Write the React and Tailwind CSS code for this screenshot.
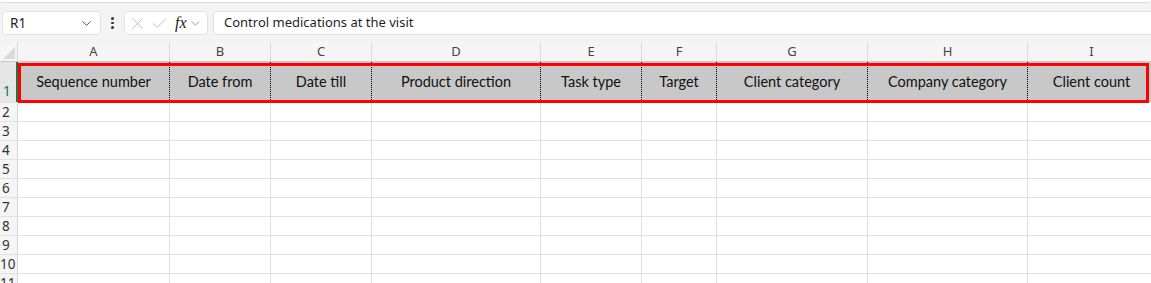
import { ChevronDown, X, Check } from "lucide-react";

const columns = [
  { letter: "A", width: "w-[152px]", label: "Sequence number" },
  { letter: "B", width: "w-[101px]", label: "Date from" },
  { letter: "C", width: "w-[101px]", label: "Date till" },
  { letter: "D", width: "w-[169px]", label: "Product direction" },
  { letter: "E", width: "w-[101px]", label: "Task type" },
  { letter: "F", width: "w-[75px]", label: "Target" },
  { letter: "G", width: "w-[151px]", label: "Client category" },
  { letter: "H", width: "w-[160px]", label: "Company category" },
  { letter: "I", width: "w-[128px]", label: "Client count" },
];

const emptyRows = [2, 3, 4, 5, 6, 7, 8, 9, 10, 11];

const uiFont = { fontFamily: "'Noto Sans', 'Open Sans', sans-serif" };

function FormulaBar() {
  return (
    <div className="flex h-[24px] items-stretch pl-[2px]">
      <div className="flex w-[99px] items-center justify-between rounded-[4px] border border-[#e2e2e2] bg-white pl-[7px] pr-[6px] text-[13.5px] text-[#1f1f1f]">
        <span>R1</span>
        <ChevronDown size={15} strokeWidth={1.5} className="text-[#444]" />
      </div>
      <div className="flex w-[23px] flex-col items-center justify-center gap-[2px]">
        <span className="h-[2.5px] w-[2.5px] rounded-full bg-[#333]" />
        <span className="h-[2.5px] w-[2.5px] rounded-full bg-[#333]" />
        <span className="h-[2.5px] w-[2.5px] rounded-full bg-[#333]" />
      </div>
      <div className="flex w-[84px] items-center rounded-[4px] border border-[#e2e2e2] bg-white pl-[3px]">
        <X size={19} strokeWidth={1} className="text-[#b0b0b0]" />
        <Check size={19} strokeWidth={1} className="ml-[3px] text-[#b0b0b0]" />
        <span
          className="ml-[6px] text-[16px] italic leading-none text-[#222]"
          style={{ fontFamily: "'Liberation Serif', serif" }}
        >
          fx
        </span>
        <ChevronDown size={13} strokeWidth={1.4} className="ml-[2px] text-[#777]" />
      </div>
      <div className="ml-[5px] flex flex-1 items-center rounded-l-[4px] border border-r-0 border-[#e2e2e2] bg-white pl-[10px] text-[13px] text-[#1f1f1f]">
        Control medications at the visit
      </div>
    </div>
  );
}

function ColumnHeader() {
  return (
    <div className="flex h-[20px] border-b border-[#c9c9c9] bg-[#f5f5f5] text-[13px] text-[#444]">
      <div className="flex w-[18px] shrink-0 items-end justify-end border-r border-[#d8d8d8] pb-[2px] pr-[2px]">
        <svg width="12" height="12" viewBox="0 0 12 12">
          <polygon points="12,0 12,12 0,12" fill="#dadada" />
        </svg>
      </div>
      {columns.map((col) => (
        <div
          key={col.letter}
          className={`${col.width} flex shrink-0 items-center justify-center border-r border-[#dcdcdc]`}
        >
          {col.letter}
        </div>
      ))}
    </div>
  );
}

function HeaderRow() {
  return (
    <div className="relative flex h-[41px] border-b border-[#e1e1e1]">
      <div className="flex w-[18px] shrink-0 items-end border-r-2 border-[#217346] bg-[#e6e6e6] pb-[1px] pl-[3px] text-[13.5px] text-[#217346]">
        1
      </div>
      {columns.map((col) => (
        <div
          key={col.letter}
          className={`${col.width} flex shrink-0 items-center justify-center border-r border-dotted border-black bg-[#c8c8c8] text-[14.5px] text-[#111]`}
          style={{ fontFamily: "Lato, 'Noto Sans', sans-serif" }}
        >
          {col.label}
        </div>
      ))}
      <div className="pointer-events-none absolute left-[18px] top-[1px] h-[40px] w-[1131px] border-[3px] border-[#ff0000]" />
    </div>
  );
}

function EmptyRow({ n }) {
  return (
    <div className="flex h-[19px] border-b border-[#e1e1e1]">
      <div className="flex w-[18px] shrink-0 items-center overflow-visible border-r border-[#d4d4d4] bg-[#f5f5f5] pl-[2px] text-[13.5px] text-[#333]">
        <span className={n >= 10 ? "-ml-[2px]" : ""}>{n}</span>
      </div>
      {columns.map((col) => (
        <div key={col.letter} className={`${col.width} shrink-0 border-r border-[#e1e1e1] bg-white`} />
      ))}
    </div>
  );
}

export default function App() {
  return (
    <div className="h-[283px] w-[1151px] overflow-hidden bg-[#f3f3f3]" style={uiFont}>
      <div className="h-[3px] rounded-b-[4px] border-b border-[#d9d9d9] bg-white" />
      <div className="pt-[8px]">
        <FormulaBar />
      </div>
      <div className="mt-[7px]">
        <ColumnHeader />
        <HeaderRow />
        {emptyRows.map((n) => (
          <EmptyRow key={n} n={n} />
        ))}
      </div>
    </div>
  );
}
